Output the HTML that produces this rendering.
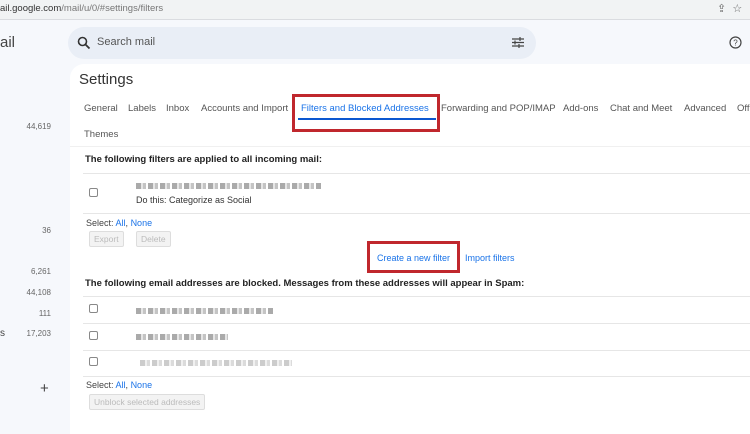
<!DOCTYPE html><html><head><style>
*{margin:0;padding:0;box-sizing:border-box}
body{width:750px;height:430px;overflow:hidden;background:#f6f8fc;font-family:"Liberation Sans",sans-serif;position:relative;color:#222}
.a{position:absolute;white-space:nowrap}
.bar{left:0;top:0;width:750px;height:20px;background:#f1f3f4;border-bottom:1px solid #dadce0}
.panel{left:70px;top:64px;width:690px;height:370px;background:#fff;border-radius:14px 0 0 0}
.tab{font-size:9.5px;color:#555;top:103px}
.line{height:1px;background:#e6e6e6}
.cb{width:9px;height:9px;border:1px solid #888;border-radius:2px;background:#fff}
.btn{border:1px solid #ddd;background:#f3f3f3;color:#bbb;font-size:8.5px;padding:2px 4px;border-radius:2px}
.blur{height:6px;background:repeating-linear-gradient(90deg,#555 0 5px,#ccc 5px 7px,#888 7px 10px,#fff 10px 12px);opacity:.5}
.n{font-size:8px;color:#666;text-align:right;width:40px;left:11px}
</style></head><body>
<div class="a bar"></div>
<div class="a" style="left:0;top:3px;font-size:9.5px;color:#333">ail.google.com<span style="color:#777">/mail/u/0/#settings/filters</span></div>
<div class="a" style="left:717px;top:2px;font-size:11px;color:#666">⇪&nbsp; ☆</div>
<div class="a" style="left:0;top:34px;font-size:15px;color:#444">ail</div>
<div class="a" style="left:68px;top:27px;width:468px;height:32px;background:#e9eef6;border-radius:16px"></div>
<svg class="a" style="left:77px;top:36px" width="14" height="14" viewBox="0 0 14 14"><circle cx="5.5" cy="5.5" r="4" fill="none" stroke="#333" stroke-width="1.6"/><path d="M8.5 8.5L12.5 12.5" stroke="#333" stroke-width="1.8"/></svg>
<div class="a" style="left:97px;top:36px;font-size:11px;color:#555">Search mail</div>
<svg class="a" style="left:511px;top:36px" width="14" height="13" viewBox="0 0 14 13"><path d="M1 3h12M1 6.5h12M1 10h12M9 1v4M4 4.5v4M8 8v4" stroke="#444" stroke-width="1.2"/></svg>
<svg class="a" style="left:729px;top:36px" width="13" height="13" viewBox="0 0 13 13"><circle cx="6.5" cy="6.5" r="5.5" fill="none" stroke="#444" stroke-width="1.2"/><text x="6.5" y="9.5" font-size="8" text-anchor="middle" fill="#444" font-family="Liberation Sans">?</text></svg>
<div class="a panel"></div>
<div class="a" style="left:79px;top:71px;font-size:15px;color:#333">Settings</div>
<div class="a tab" style="left:84px">General</div>
<div class="a tab" style="left:128px">Labels</div>
<div class="a tab" style="left:166px">Inbox</div>
<div class="a tab" style="left:201px">Accounts and Import</div>
<div class="a tab" style="left:301px;color:#1a73e8">Filters and Blocked Addresses</div>
<div class="a" style="left:298px;top:118px;width:138px;height:2px;background:#0b57d0"></div>
<div class="a" style="left:292px;top:94px;width:148px;height:38px;border:3px solid #c0272d"></div>
<div class="a tab" style="left:441px">Forwarding and POP/IMAP</div>
<div class="a tab" style="left:563px">Add-ons</div>
<div class="a tab" style="left:610px">Chat and Meet</div>
<div class="a tab" style="left:684px">Advanced</div>
<div class="a tab" style="left:737px">Off</div>
<div class="a tab" style="left:84px;top:129px">Themes</div>
<div class="a line" style="left:70px;top:146px;width:680px;background:#f0f0f0"></div>
<div class="a" style="left:85px;top:154px;font-size:9.5px;font-weight:bold;color:#222">The following filters are applied to all incoming mail:</div>
<div class="a line" style="left:83px;top:173px;width:667px"></div>
<div class="a cb" style="left:89px;top:188px"></div>
<div class="a blur" style="left:136px;top:183px;width:185px"></div>
<div class="a" style="left:136px;top:195px;font-size:9px;color:#333">Do this: Categorize as Social</div>
<div class="a line" style="left:83px;top:213px;width:667px"></div>
<div class="a" style="left:86px;top:218px;font-size:9px;color:#444">Select: <span style="color:#1a73e8">All</span>, <span style="color:#1a73e8">None</span></div>
<div class="a btn" style="left:89px;top:231px">Export</div>
<div class="a btn" style="left:136px;top:231px">Delete</div>
<div class="a" style="left:367px;top:241px;width:93px;height:32px;border:3px solid #c0272d"></div>
<div class="a" style="left:377px;top:253px;font-size:9px;color:#1a73e8">Create a new filter</div>
<div class="a" style="left:465px;top:253px;font-size:9px;color:#1a73e8">Import filters</div>
<div class="a" style="left:85px;top:278px;font-size:9.5px;font-weight:bold;color:#222">The following email addresses are blocked. Messages from these addresses will appear in Spam:</div>
<div class="a line" style="left:83px;top:296px;width:667px"></div>
<div class="a cb" style="left:89px;top:304px"></div>
<div class="a blur" style="left:136px;top:308px;width:137px"></div>
<div class="a line" style="left:83px;top:323px;width:667px"></div>
<div class="a cb" style="left:89px;top:331px"></div>
<div class="a blur" style="left:136px;top:334px;width:92px"></div>
<div class="a line" style="left:83px;top:350px;width:667px"></div>
<div class="a cb" style="left:89px;top:357px"></div>
<div class="a blur" style="left:140px;top:360px;width:152px;opacity:.3"></div>
<div class="a line" style="left:83px;top:376px;width:667px"></div>
<div class="a" style="left:86px;top:380px;font-size:9px;color:#444">Select: <span style="color:#1a73e8">All</span>, <span style="color:#1a73e8">None</span></div>
<div class="a btn" style="left:89px;top:394px">Unblock selected addresses</div>
<div class="a n" style="top:122px">44,619</div>
<div class="a n" style="top:226px">36</div>
<div class="a n" style="top:267px">6,261</div>
<div class="a n" style="top:288px">44,108</div>
<div class="a n" style="top:309px">111</div>
<div class="a n" style="top:329px">17,203</div>
<div class="a" style="left:0;top:328px;font-size:10px;color:#444">s</div>
<div class="a" style="left:40px;top:380px;font-size:15px;color:#444">+</div>
</body></html>
